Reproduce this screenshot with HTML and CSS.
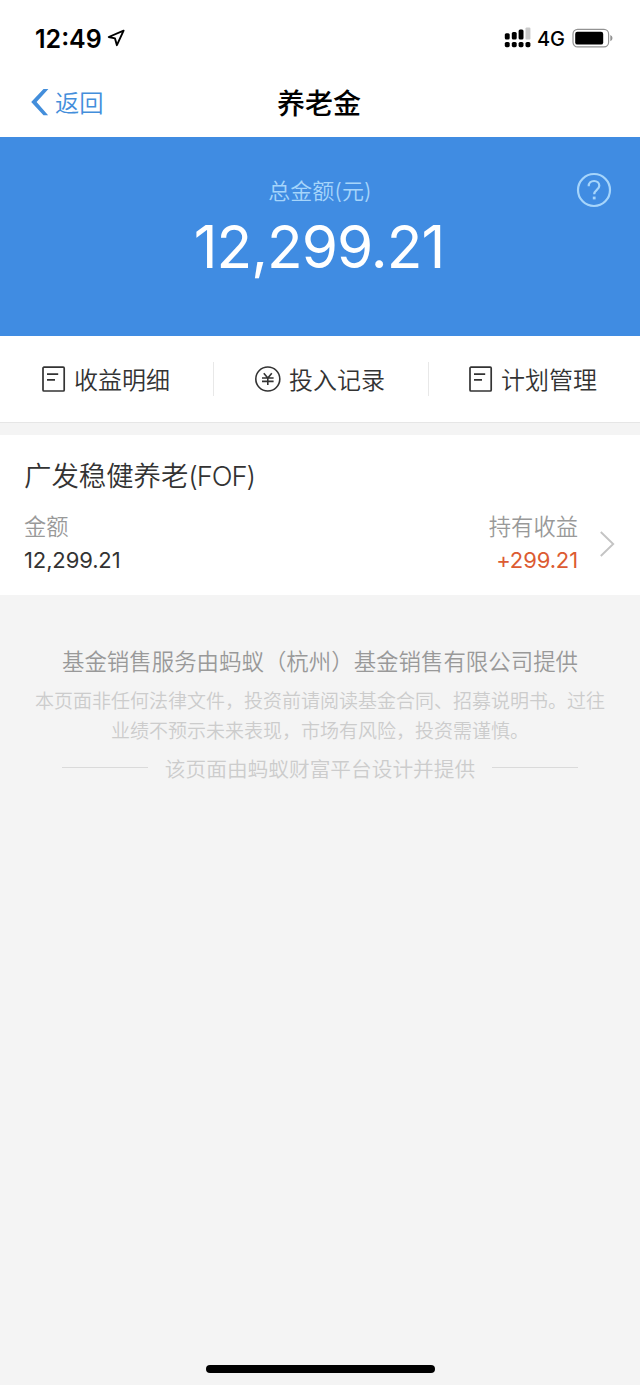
FILE: index.html
```html
<!DOCTYPE html>
<html lang="zh-CN">
<head>
<meta charset="utf-8">
<title>养老金</title>
<link rel="stylesheet" href="styles.css">
</head>
<body>
<div class="screen">
  <header class="status">
    <span class="time">12:49</span>
    <svg class="locate" width="18" height="18" viewBox="0 0 18 18"><path d="M16.6 1.6 1.7 8 8 9.4 9.9 16.2Z" fill="none" stroke="#000" stroke-width="1.9" stroke-linejoin="round"/></svg>
    <svg class="signal" width="27" height="21" viewBox="0 0 27 21">
      <rect x="0.8" y="6.2" width="4.9" height="6.4" rx="1.5"/><rect x="7.8" y="5" width="4.9" height="7.6" rx="1.5"/><rect x="14.6" y="2.4" width="4.9" height="10.2" rx="1.5"/><rect x="21.5" y="0.4" width="4.9" height="12.2" rx="1.2" fill="#c9c9c9"/>
      <rect x="0.8" y="15" width="4.9" height="5.2" rx="1.6"/><rect x="7.8" y="15" width="4.9" height="5.2" rx="1.6"/><rect x="14.6" y="15" width="4.9" height="5.2" rx="1.6"/><rect x="21.5" y="15" width="4.9" height="5.2" rx="1.6"/>
    </svg>
    <span class="network">4G</span>
    <svg class="battery" width="42" height="20" viewBox="0 0 42 20">
      <rect x="1" y="1.3" width="35.6" height="17.6" rx="4.6" fill="#fff" stroke="#929292" stroke-width="1.2"/>
      <rect x="3.2" y="3.7" width="28" height="12.9" rx="2.2"/>
      <path d="M38.3 7v6.2q2.2-.8 2.2-3.1T38.3 7Z" fill="#929292"/>
    </svg>
  </header>

  <nav class="nav">
    <a class="back">
      <svg width="19" height="28" viewBox="0 0 19 28"><path d="M18.4 1h-4.9L1.2 13.9 13.5 27.2h4.6L6.6 13.9Z" fill="#438edb"/></svg>
      <span>返回</span>
    </a>
    <h1 class="title">养老金</h1>
  </nav>

  <section class="total">
    <div class="total-label">总金额(元)</div>
    <div class="total-value">12,299.21</div>
    <svg class="help" width="36" height="36" viewBox="0 0 36 36" fill="none" stroke="#a6d5fb">
      <circle cx="18" cy="18" r="16" stroke-width="2.2"/>
      <path d="M12.7 14.2c0-3.2 2.3-5.2 5.4-5.2 3 0 5.2 1.8 5.2 4.7 0 4.1-5.1 4.2-5.1 8.6" stroke-width="2.2"/>
      <path d="M18.2 24.6v2.8" stroke-width="2.8"/>
    </svg>
  </section>

  <section class="actions">
    <a class="action first">
      <svg width="26" height="28" viewBox="0 0 26 28" fill="none" stroke="#333" stroke-width="1.7"><rect x="3" y="2.2" width="21.2" height="23.8" rx="1"/><path d="M7 9.2h11.2M7 14.8h8"/></svg>
      <span>收益明细</span>
    </a>
    <a class="action second">
      <svg width="26" height="28" viewBox="0 0 26 28" fill="none" stroke="#333" stroke-width="1.6"><circle cx="12.8" cy="14" r="12"/><path d="m8.8 8.2 4 4.8 4-4.8M7 13h11.6M7 16.4h11.6M12.8 13v7"/></svg>
      <span>投入记录</span>
    </a>
    <a class="action third">
      <svg width="26" height="28" viewBox="0 0 26 28" fill="none" stroke="#333" stroke-width="1.7"><rect x="3" y="2.2" width="21.2" height="23.8" rx="1"/><path d="M7 9.2h11.2M7 14.8h8"/></svg>
      <span>计划管理</span>
    </a>
  </section>

  <section class="fund">
    <h2 class="fund-name">广发稳健养老<span class="latin">(FOF)</span></h2>
    <div class="fund-row">
      <div class="cell">
        <div class="label">金额</div>
        <div class="value">12,299.21</div>
      </div>
      <div class="cell right">
        <div class="label">持有收益</div>
        <div class="value gain">+299.21</div>
      </div>
      <svg class="chevron" width="18" height="28" viewBox="0 0 18 28"><path d="M2.8 2 15.2 14 2.8 26" fill="none" stroke="#c4c4c4" stroke-width="1.9"/></svg>
    </div>
  </section>

  <footer class="foot">
    <p class="provider">基金销售服务由蚂蚁（杭州）基金销售有限公司提供</p>
    <p class="notice">本页面非任何法律文件，投资前请阅读基金合同、招募说明书。过往<br>业绩不预示未来表现，市场有风险，投资需谨慎。</p>
    <p class="platform"><span>该页面由蚂蚁财富平台设计并提供</span></p>
  </footer>
  <div class="home-bar"></div>
</div>
</body>
</html>
```
FILE: styles.css
```css
* { box-sizing: border-box; }
body { margin: 0; background: #f4f4f4; }
h1, h2, p { margin: 0; font-weight: inherit; }
svg { display: block; flex: none; }

.screen {
  width: 640px;
  height: 1385px;
  display: flex;
  flex-direction: column;
  font-family: Inter, "Noto Sans CJK SC DemiLight", "Noto Sans CJK SC", sans-serif;
  font-weight: 350;
  color: #333;
  white-space: nowrap;
  overflow: hidden;
}

.status {
  height: 76px;
  padding-left: 35px;
  padding-right: 26px;
  display: flex;
  align-items: center;
  background: #fff;
  color: #000;
}
.time { font-size: 25px; font-weight: 600; width: 67px; margin-top: 1px; }
.locate { margin-left: 5px; }
.signal { margin-left: auto; margin-top: -1px; }
.network { font-size: 20px; font-weight: 450; letter-spacing: -0.2px; margin: 1px 8px 0 6px; width: 27px; }

.nav {
  height: 61px;
  padding: 0 30px 9px;
  display: grid;
  grid-template-columns: 1fr auto 1fr;
  align-items: center;
  background: #fff;
}
.back { display: flex; align-items: center; gap: 6px; font-size: 24.3px; line-height: 36px; color: #438edb; }
.back span { padding-top: 2px; }
.title { font-family: "Noto Sans CJK SC", sans-serif; font-size: 28px; font-weight: 500; line-height: 42px; margin: 0 2px 0 0; color: #000; }

.total {
  height: 199px;
  padding-top: 38px;
  position: relative;
  background: #408ce2;
  text-align: center;
}
.total-label { font-size: 22px; line-height: 32px; color: #a6d5fb; }
.total-value { font-size: 58.5px; font-weight: 400; line-height: 70px; letter-spacing: -1px; margin: 5px 2px 0 0; color: #fff; }
.help { position: absolute; right: 28px; top: 35px; }

.actions {
  height: 87px;
  display: grid;
  grid-template-columns: 213px 215px 212px;
  align-items: center;
  background: #fff;
  border-bottom: 1px solid #e6e6e6;
}
.action { height: 34px; display: flex; align-items: center; gap: 8px; font-size: 24px; line-height: 34px; }
.action span { padding-top: 3px; }
.action + .action { border-left: 1px solid #e8e8e8; }
.first { padding-left: 40px; }
.second { padding-left: 41px; }
.third { padding-left: 38px; }

.fund { height: 160px; margin-top: 12px; padding: 21px 24px 0; background: #fff; }
.fund-name { font-size: 27.4px; line-height: 40px; }
.latin { letter-spacing: -1.1px; }
.fund-row { display: flex; margin-top: 14px; }
.cell { font-size: 22.3px; line-height: 34px; }
.right { margin-left: auto; text-align: right; }
.label { color: #999; }
.value { font-size: 22px; font-weight: 400; letter-spacing: -0.12px; margin-top: -1px; color: #333; }
.gain { color: #dc5b32; }
.chevron { margin: 20px 0 0 20px; }

.foot { padding-top: 50px; text-align: center; }
.provider { font-size: 22.45px; line-height: 34px; color: #999; }
.notice { margin-top: 8px; font-size: 19px; line-height: 30px; color: #ccc; }
.platform { margin: 2px 62px 0; display: flex; align-items: center; gap: 17px; font-size: 20.7px; line-height: 34px; color: #ccc; }
.platform span { position: relative; top: 1px; padding-top: 3px; }
.platform::before, .platform::after { content: ""; flex: 1; height: 1px; background: #dadada; }

.home-bar { width: 229px; height: 8px; margin: auto auto 12px; border-radius: 4px; background: #000; }
```
